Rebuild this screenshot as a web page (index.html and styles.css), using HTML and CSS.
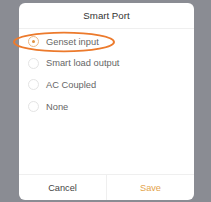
FILE: index.html
```html
<!DOCTYPE html>
<html>
<head>
<meta charset="utf-8">
<link rel="stylesheet" href="styles.css">
</head>
<body>
<div class="screen">
  <div class="dialog">
    <div class="title">Smart Port</div>
    <div class="options">
      <div class="option selected">
        <span class="radio"><span class="dot"></span></span>
        <span class="label">Genset input</span>
        <svg class="mark" width="104" height="22" viewBox="0 0 104 22"><ellipse cx="52" cy="11" rx="50" ry="9.4" fill="none" stroke="#ec7a2c" stroke-width="1.9"/></svg>
      </div>
      <div class="option"><span class="radio"></span><span class="label">Smart load output</span></div>
      <div class="option"><span class="radio"></span><span class="label">AC Coupled</span></div>
      <div class="option"><span class="radio"></span><span class="label">None</span></div>
    </div>
    <div class="footer">
      <div class="btn cancel">Cancel</div>
      <div class="btn save">Save</div>
    </div>
  </div>
</div>
</body>
</html>
```
FILE: styles.css
```css
html, body {
  margin: 0;
  padding: 0;
}
body {
  width: 211px;
  height: 202px;
  background: #8a8c93;
  font-family: "Liberation Sans", Arial, sans-serif;
  overflow: hidden;
}
.screen {
  padding: 3px 17px 2px 19px;
  height: 202px;
  box-sizing: border-box;
}
.dialog {
  background: #fff;
  border-radius: 6px;
  height: 197px;
  display: flex;
  flex-direction: column;
}
.title {
  height: 25px;
  display: flex;
  align-items: center;
  justify-content: center;
  font-size: 9.7px;
  color: #333;
  border-bottom: 1px solid #efefef;
}
.options {
  flex: 1;
  padding-top: 2px;
}
.option {
  position: relative;
  height: 21.6px;
  display: flex;
  align-items: center;
  padding-left: 9px;
}
.radio {
  width: 11px;
  height: 11px;
  border: 1px solid #e4e4e4;
  border-radius: 50%;
  box-sizing: border-box;
  display: flex;
  align-items: center;
  justify-content: center;
  margin-right: 7px;
}
.selected .radio {
  border-color: #ebb886;
}
.dot {
  width: 3px;
  height: 3px;
  border-radius: 50%;
  background: #e0913e;
}
.label {
  font-size: 9.3px;
  color: #666;
}
.mark {
  position: absolute;
  left: -7px;
  top: 0px;
}
.footer {
  height: 25px;
  border-top: 1px solid #efefef;
  display: flex;
}
.btn {
  flex: 1;
  display: flex;
  align-items: center;
  justify-content: center;
  font-size: 9.2px;
}
.cancel {
  color: #444;
  border-right: 1px solid #efefef;
}
.save {
  color: #e3a34a;
}
```
